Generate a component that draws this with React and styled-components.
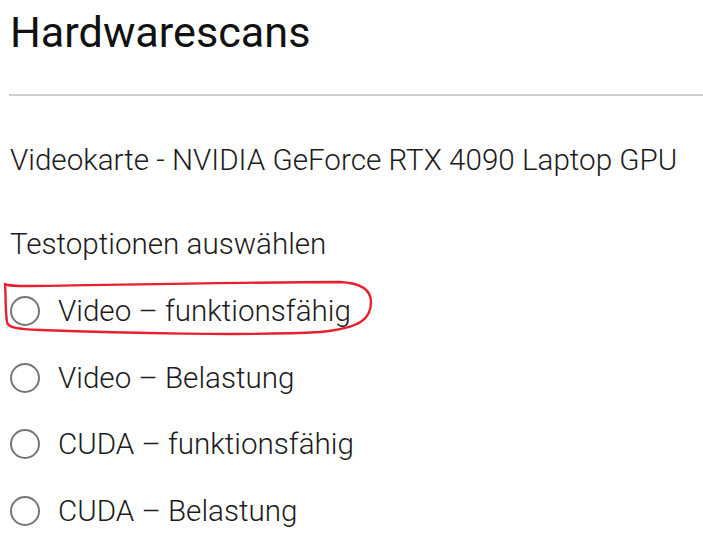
import React from "react";
import styled, { createGlobalStyle } from "styled-components";

const Global = createGlobalStyle`
  html, body { margin: 0; padding: 0; background: #fff; }
  body { font-family: Roboto, "Noto Sans", sans-serif; color: #1b1b1b; }
`;

const Page = styled.main`
  padding: 0 0 0 10px;
  display: flex;
  flex-direction: column;
`;

const Title = styled.h1`
  margin: 0;
  padding-top: 7px;
  font-size: 43.2px;
  line-height: 52px;
  font-weight: 400;
  color: #111;
`;

const Divider = styled.hr`
  margin: 35px 0 0 -1px;
  border: 0;
  height: 2px;
  background: #cfcfcf;
`;

const Device = styled.p`
  margin: 46px 0 0;
  font-size: 29.6px;
  line-height: 36px;
  font-weight: 300;
`;

const Label = styled.p`
  margin: 48px 0 0;
  font-size: 29.6px;
  line-height: 36px;
  font-weight: 300;
`;

const Options = styled.div`
  margin-top: 16px;
  display: flex;
  flex-direction: column;
`;

const Row = styled.label`
  position: relative;
  display: flex;
  align-items: center;
  gap: 18px;
  height: 66.5px;
  font-size: 29.6px;
  font-weight: 300;
`;

const Radio = styled.span`
  box-sizing: border-box;
  width: 30px;
  height: 30px;
  border-radius: 50%;
  border: 2px solid #767676;
  flex: none;
`;

const Scribble = styled.svg`
  position: absolute;
  left: -10px;
  top: 0;
  width: 703px;
  height: 66px;
  pointer-events: none;
  overflow: visible;
`;

const options = [
  "Video – funktionsfähig",
  "Video – Belastung",
  "CUDA – funktionsfähig",
  "CUDA – Belastung",
];

export default function App() {
  return (
    <>
      <Global />
      <Page>
        <Title>Hardwarescans</Title>
        <Divider />
        <Device>Videokarte - NVIDIA GeForce RTX 4090 Laptop GPU</Device>
        <Label>Testoptionen auswählen</Label>
        <Options>
          {options.map((o, i) => (
            <Row key={o}>
              <Radio />
              {o}
              {i === 0 && (
                <Scribble viewBox="0 0 703 66">
                  <path
                    d="M5 6 C8 8 14 8 30 8 C120 7 250 4 340 4 C362 5 371 12 371 24 C371 40 362 50 320 54 C250 58 120 55 40 52 C18 51 8 50 7 44 C5 30 6 18 5 6"
                    fill="none"
                    stroke="#e8202e"
                    strokeWidth="2.4"
                    strokeLinecap="round"
                    strokeLinejoin="round"
                  />
                </Scribble>
              )}
            </Row>
          ))}
        </Options>
      </Page>
    </>
  );
}
